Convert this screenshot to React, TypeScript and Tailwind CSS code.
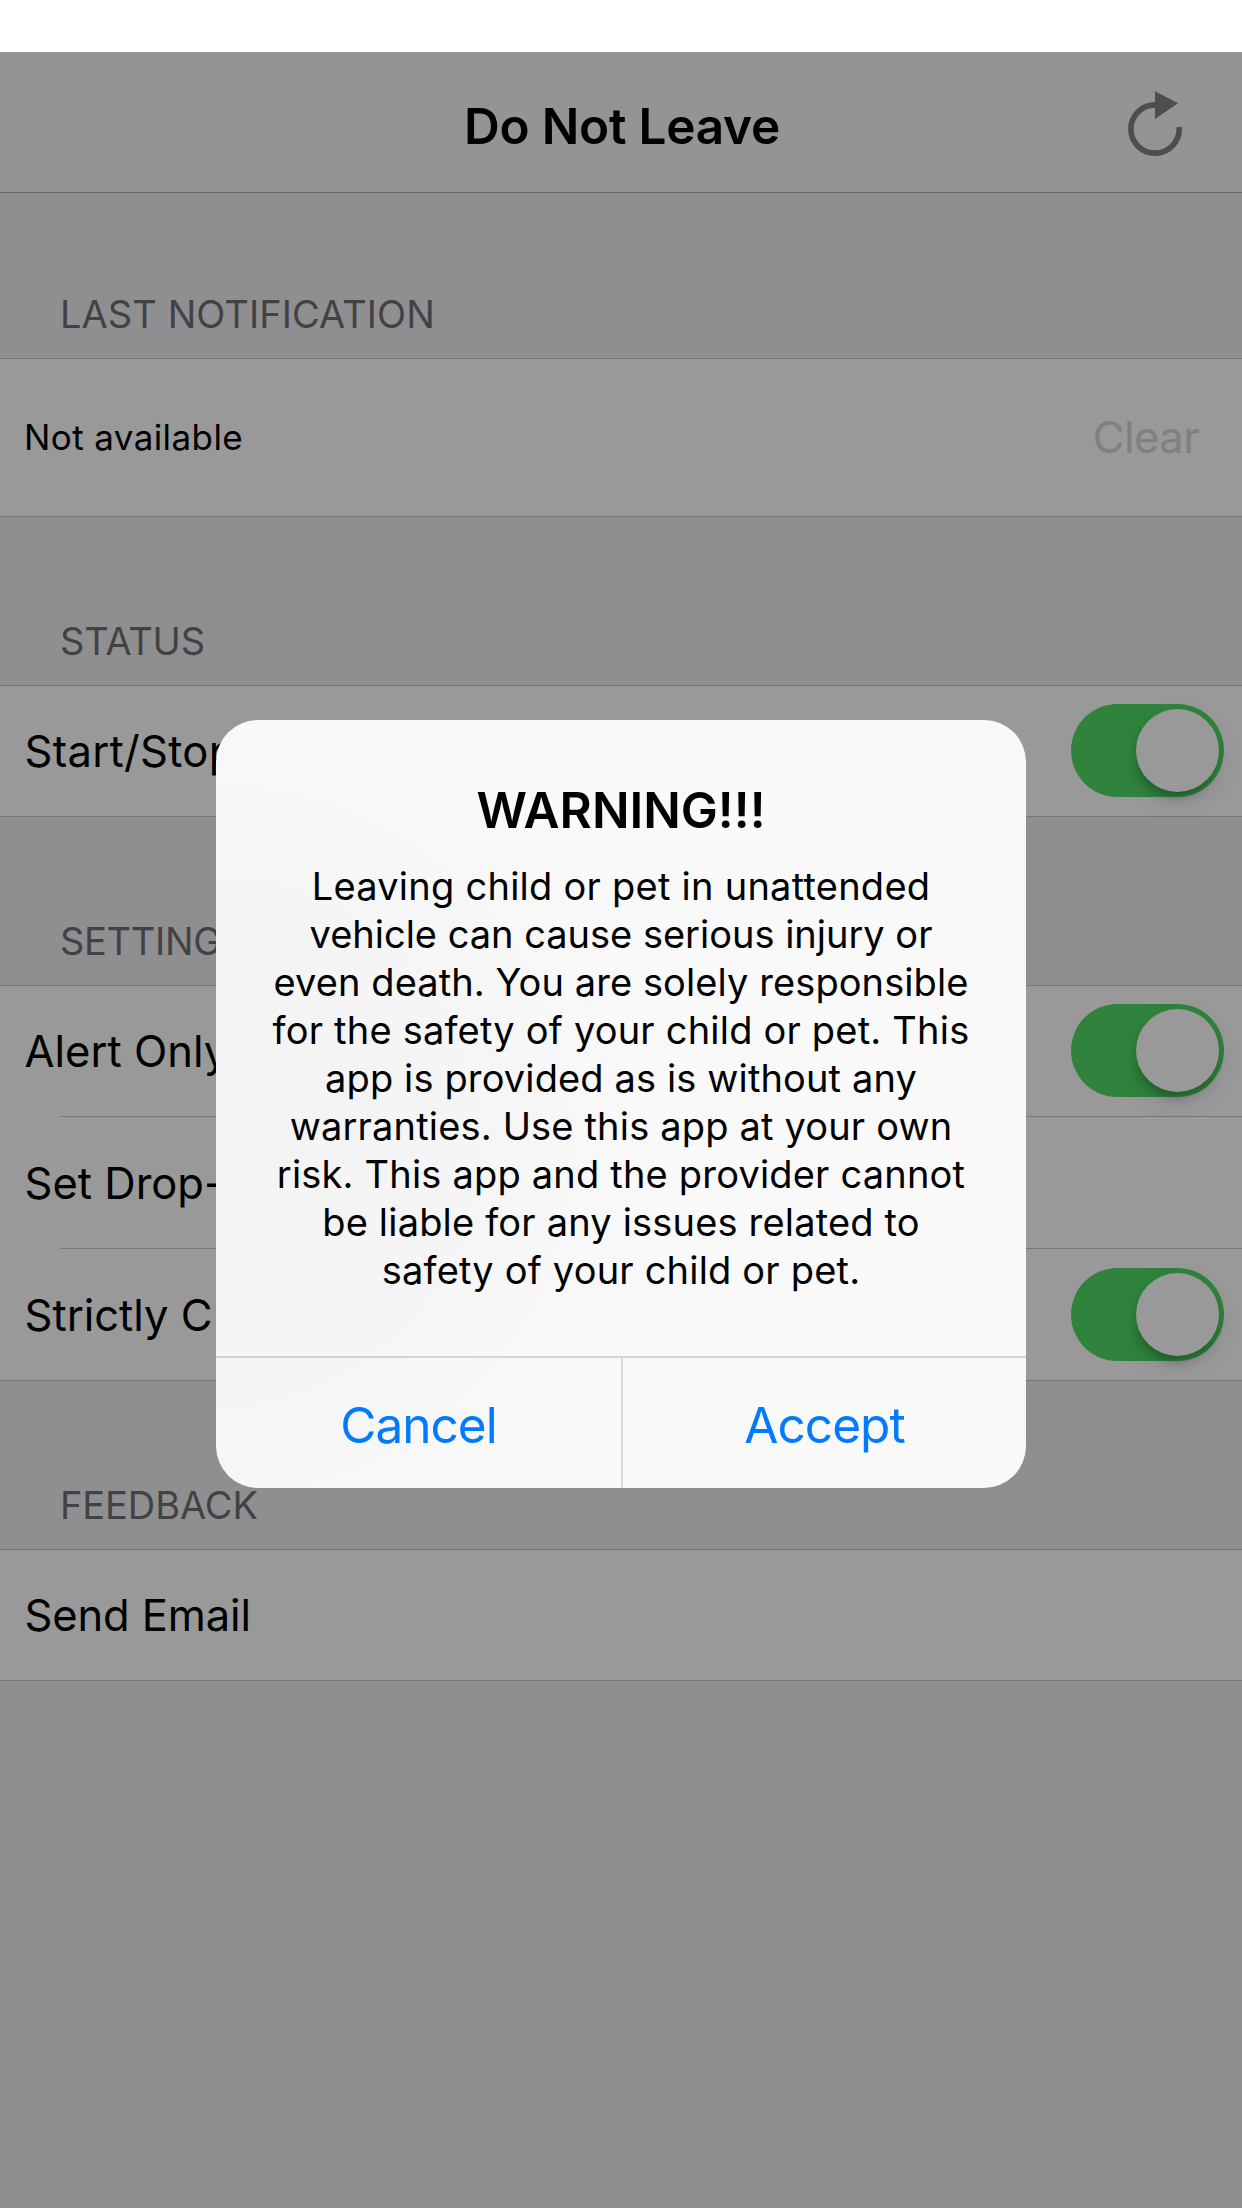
import type { ReactNode } from "react";

function Toggle() {
  return (
    <div className="mr-[18px] mt-[18px] h-[93px] w-[153px] shrink-0 rounded-full bg-[#2f833c] p-[5px]">
      <div className="ml-auto size-[83px] rounded-full bg-[#999999] shadow-[0_9px_24px_rgba(0,0,0,0.1),-1px_8px_10px_-3px_rgba(0,0,0,0.25)]" />
    </div>
  );
}

function SectionLabel({ children, className }: { children: ReactNode; className: string }) {
  return (
    <div className={`flex items-end pb-5 pl-[60px] text-[38px] leading-[48px] text-[#424244] ${className}`}>
      {children}
    </div>
  );
}

function Row({ label, className = "h-[130px]", toggle = false }: { label: string; className?: string; toggle?: boolean }) {
  return (
    <div className={`flex justify-between whitespace-nowrap pl-[24.5px] text-[43.5px] ${className}`}>
      <span className="self-center pt-[2px]">{label}</span>
      {toggle && <Toggle />}
    </div>
  );
}

function RefreshIcon() {
  return (
    <svg className="h-[65px] w-[54px]" viewBox="0 0 54 65" fill="none">
      <path d="M51.1 36A24.15 24.15 0 1 1 27 13.85" stroke="#4e4e4e" strokeWidth="5.7" />
      <path d="M27 .2L50 12.3L27 28Z" fill="#4e4e4e" />
    </svg>
  );
}

const message = [
  { text: "Leaving child or pet in unattended", spacing: "tracking-[0.25px]" },
  { text: "vehicle can cause serious injury or", spacing: "tracking-[-0.01px]" },
  { text: "even death. You are solely responsible", spacing: "tracking-[0.09px]" },
  { text: "for the safety of your child or pet. This", spacing: "tracking-[0.2px]" },
  { text: "app is provided as is without any", spacing: "tracking-[0.13px]" },
  { text: "warranties. Use this app at your own", spacing: "tracking-[0.17px]" },
  { text: "risk. This app and the provider cannot", spacing: "tracking-[0.19px]" },
  { text: "be liable for any issues related to", spacing: "tracking-[0.18px]" },
  { text: "safety of your child or pet.", spacing: "tracking-[0.19px]" },
];

function WarningDialog() {
  return (
    <div className="absolute left-[216px] top-[720px] w-[810px] overflow-hidden rounded-[42px] bg-[#f9f9f9] bg-[radial-gradient(circle_at_0%_55%,#f3f3f3_0%,#f5f5f5_25%,#f9f9f9_48%)] text-center">
      <h2 className="pt-[60px] text-[49.5px] font-semibold leading-[60px]">WARNING!!!</h2>
      <div className="mb-[62px] mt-[22px] text-[38px] leading-[48px]">
        {message.map((line) => (
          <p key={line.text} className={`whitespace-nowrap ${line.spacing}`}>{line.text}</p>
        ))}
      </div>
      <div className="flex h-[132px] border-t-2 border-[#d5d4da] text-[49.5px] leading-[60px] tracking-[-0.95px] text-[#007aff]">
        <button className="w-[407px] border-r-2 border-[#d9d9de] pt-1">Cancel</button>
        <button className="flex-1 pt-1">Accept</button>
      </div>
    </div>
  );
}

export default function App() {
  return (
    <div className="relative h-[2208px] w-[1242px] overflow-hidden bg-[#8f8f92] pt-[52px] font-['Inter',sans-serif] text-black">
      <div className="absolute inset-x-0 top-0 h-[52px] bg-white" />
      <header className="grid h-[141px] grid-cols-[1fr_auto_1fr] items-center border-b border-[#656669] bg-[#949494]">
        <div />
        <h1 className="pl-[2px] pt-2 text-[49.5px] font-semibold leading-[60px] tracking-[-0.23px]">Do Not Leave</h1>
        <div className="flex justify-end pr-[60px] pt-[3px]"><RefreshIcon /></div>
      </header>

      <SectionLabel className="h-[165px] tracking-[0.07px]">LAST NOTIFICATION</SectionLabel>
      <div className="flex h-[159px] items-center justify-between border-y border-[#78777a] bg-[#999999] pl-6 pr-[43px]">
        <span className="text-[35px] tracking-[0.4px]">Not available</span>
        <span className="text-[43.5px] tracking-[-0.55px] text-[#808080]">Clear</span>
      </div>

      <SectionLabel className="h-[168px] tracking-[-0.15px]">STATUS</SectionLabel>
      <div className="border-y border-[#78777a] bg-[#999999]">
        <Row label="Start/Stop" className="h-[130px] tracking-[0.3px]" toggle />
      </div>

      <SectionLabel className="h-[168px] tracking-[-0.3px]">SETTINGS</SectionLabel>
      <div className="border-y border-[#78777a] bg-[#999999]">
        <Row label="Alert Only" toggle />
        <div className="ml-[60px] h-px bg-[#78777a]" />
        <Row label="Set Drop-" className="h-[131px] pt-px" />
        <div className="ml-[60px] h-px bg-[#78777a]" />
        <Row label="Strictly C" className="h-[131px] pt-px" toggle />
      </div>

      <SectionLabel className="h-[168px] tracking-[-0.1px]">FEEDBACK</SectionLabel>
      <div className="border-y border-[#78777a] bg-[#999999]">
        <Row label="Send Email" className="h-[130px] tracking-[-0.12px]" />
      </div>

      <WarningDialog />
    </div>
  );
}
